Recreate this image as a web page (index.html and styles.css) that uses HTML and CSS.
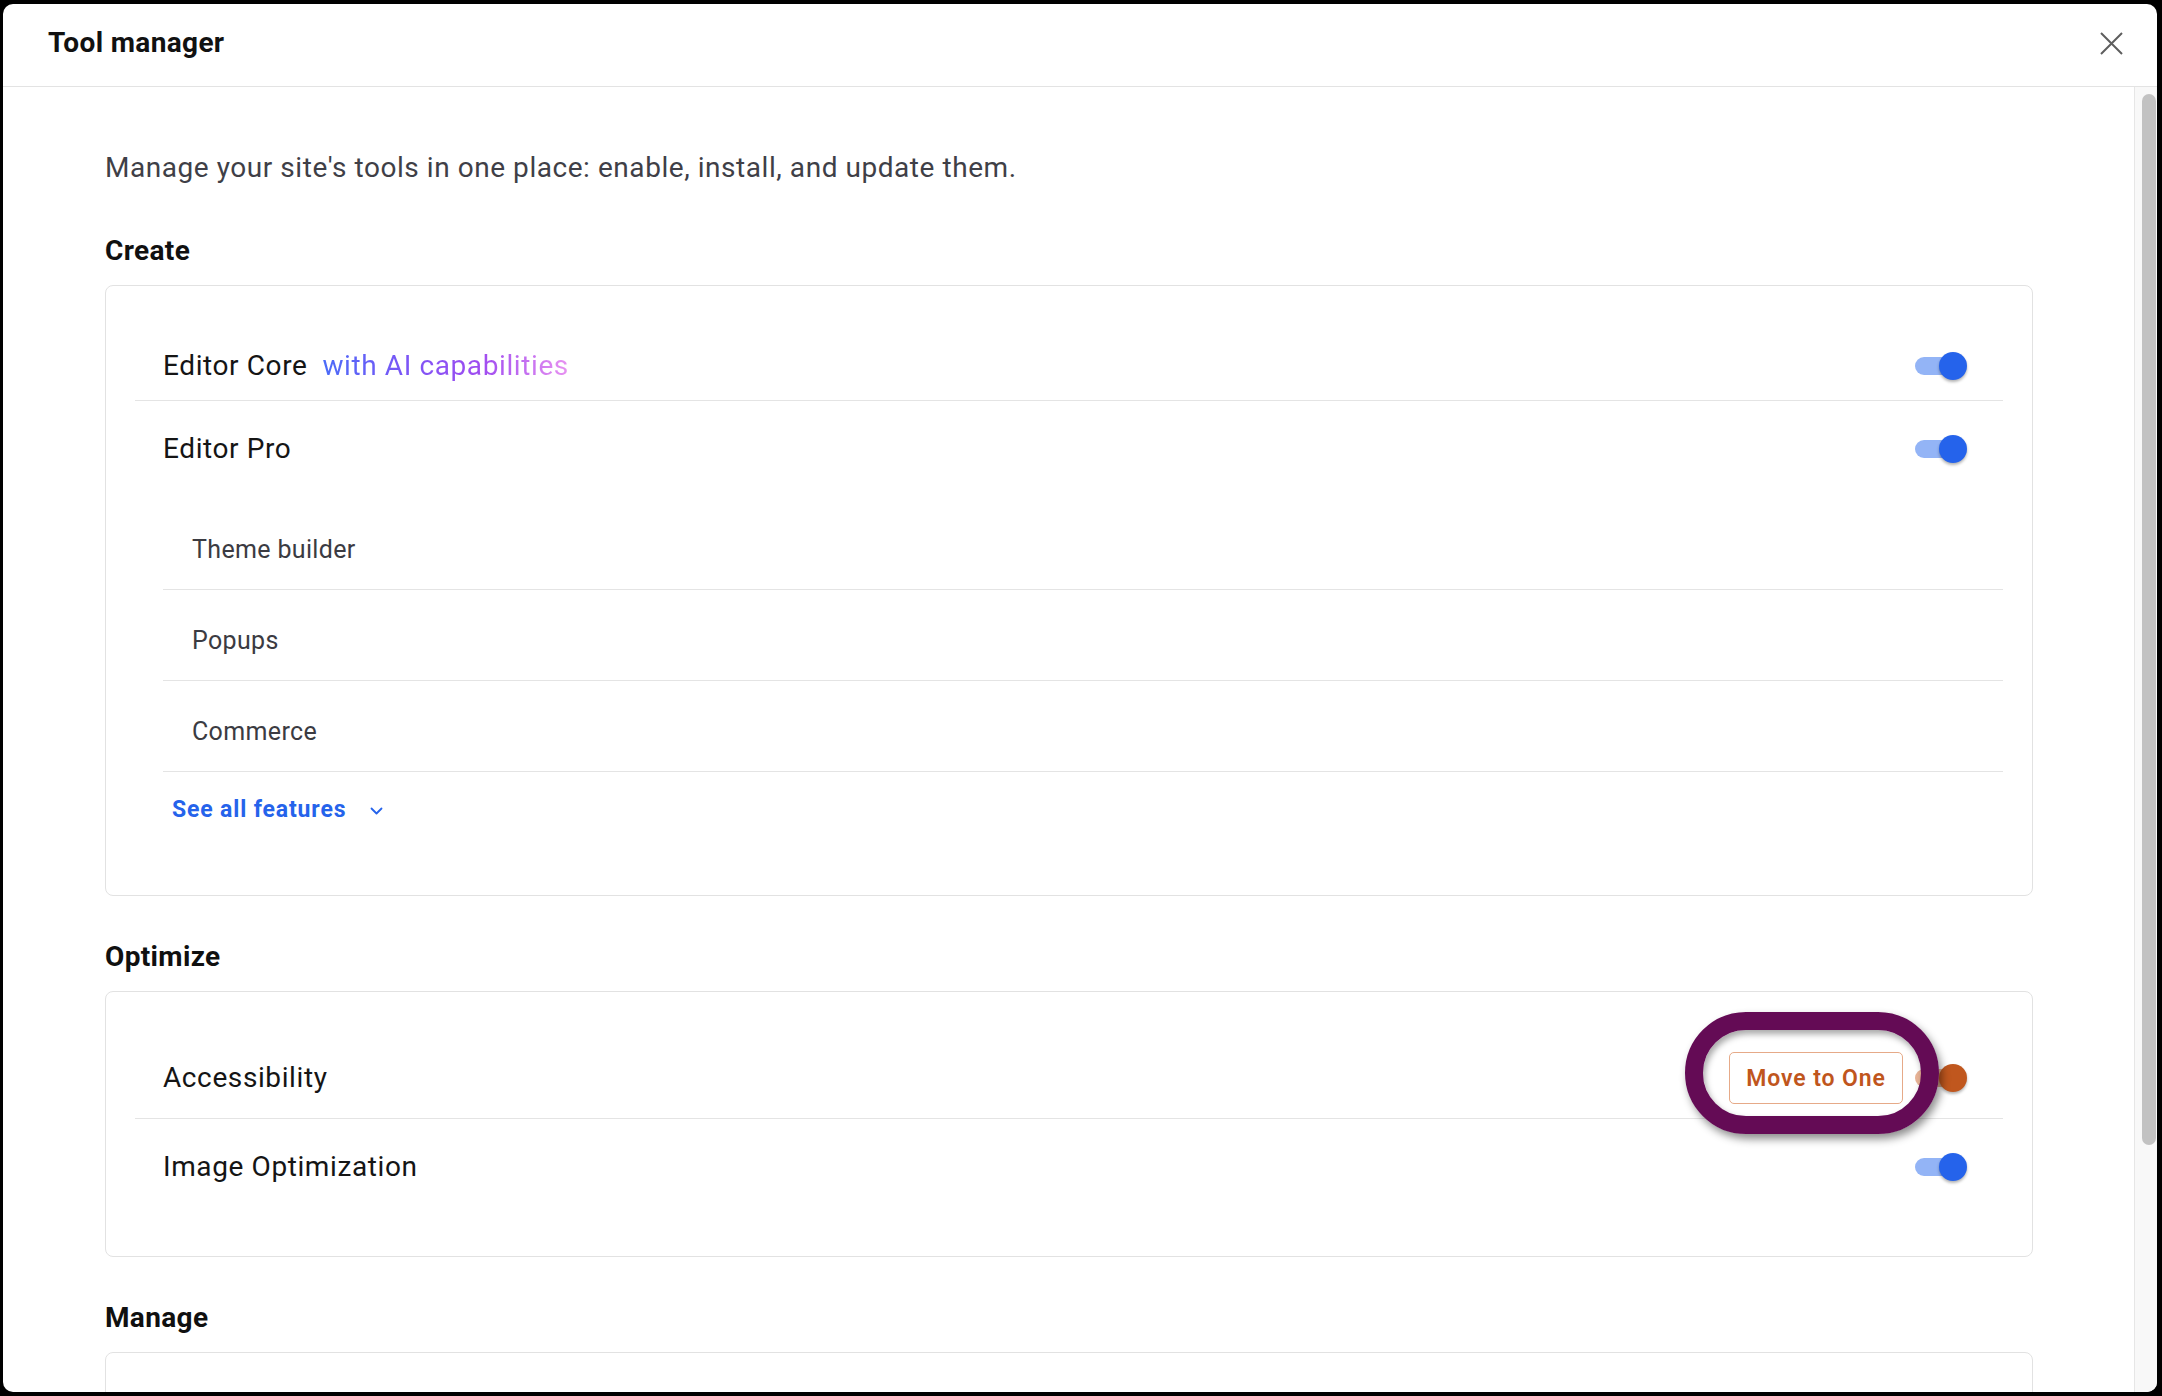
FILE: index.html
```html
<!DOCTYPE html>
<html lang="en">
<head>
<meta charset="utf-8">
<title>Tool manager</title>
<link rel="stylesheet" href="styles.css">
</head>
<body>
<div class="dialog">
  <header class="dialog-header">
    <h1 class="dialog-title">Tool manager</h1>
    <button class="close-btn" aria-label="Close">
      <svg width="23" height="23" viewBox="0 0 23 23"><path d="M1 1L22 22M22 1L1 22" stroke="#5e5e5e" stroke-width="2" fill="none"/></svg>
    </button>
  </header>
  <div class="dialog-body">
    <main class="content">
      <p class="intro">Manage your site's tools in one place: enable, install, and update them.</p>

      <section class="group">
        <h2 class="group-title">Create</h2>
        <div class="card card-create">
          <div class="tool-row divided">
            <div class="tool-name">Editor Core<span class="ai">with AI capabilities</span></div>
            <span class="toggle"><span class="track"></span><span class="thumb"></span></span>
          </div>
          <div class="tool-row">
            <div class="tool-name">Editor Pro</div>
            <span class="toggle"><span class="track"></span><span class="thumb"></span></span>
          </div>
          <div class="sublist">
            <div class="subrow">Theme builder</div>
            <div class="subrow">Popups</div>
            <div class="subrow">Commerce</div>
          </div>
          <a class="see-all" href="#">See all features
            <svg class="chev" width="13" height="8" viewBox="0 0 13 8"><path d="M1.5 1.5L6.5 6.5L11.5 1.5" stroke="#2563eb" stroke-width="1.8" fill="none" stroke-linecap="round" stroke-linejoin="round"/></svg>
          </a>
        </div>
      </section>

      <section class="group">
        <h2 class="group-title">Optimize</h2>
        <div class="card card-optimize">
          <div class="tool-row divided">
            <div class="tool-name">Accessibility</div>
            <div class="actions">
              <button class="move-btn">Move to One</button>
              <span class="toggle orange"><span class="track"></span><span class="thumb"></span></span>
              <span class="highlight-ring"></span>
            </div>
          </div>
          <div class="tool-row">
            <div class="tool-name">Image Optimization</div>
            <span class="toggle"><span class="track"></span><span class="thumb"></span></span>
          </div>
        </div>
      </section>

      <section class="group">
        <h2 class="group-title">Manage</h2>
        <div class="card card-manage"></div>
      </section>
    </main>
    <div class="scrollbar"><div class="scroll-thumb"></div></div>
  </div>
</div>
</body>
</html>
```

FILE: styles.css
```css
* { box-sizing: border-box; }
html, body { margin: 0; height: 100%; }
body {
  background: #000;
  font-family: Roboto, "Noto Sans", "Liberation Sans", Arial, sans-serif;
  overflow: hidden;
}
.dialog {
  margin: 4px 5px 4px 3px;
  height: calc(100vh - 8px);
  background: #fff;
  border-radius: 10px;
  display: flex;
  flex-direction: column;
  overflow: hidden;
}
.dialog-header {
  flex: 0 0 83px;
  display: flex;
  align-items: center;
  justify-content: space-between;
  padding: 0 34px 4px 45px;
  border-bottom: 1px solid #e3e3e3;
}
.dialog-title {
  margin: 0;
  font-size: 28px;
  line-height: 34px;
  font-weight: 700;
  color: #111;
  letter-spacing: 0.35px;
}
.close-btn {
  width: 23px;
  height: 23px;
  padding: 0;
  border: 0;
  background: none;
  display: flex;
}
.dialog-body {
  flex: 1;
  display: flex;
  min-height: 0;
}
.content {
  flex: 1;
  overflow: hidden;
  padding: 63px 101px 0 102px;
}
.scrollbar {
  flex: 0 0 23px;
  background: #f8f8f8;
  border-left: 1px solid #e6e6e6;
  padding: 7px 1px 0 7px;
}
.scroll-thumb {
  width: 14px;
  height: 1051px;
  background: #c2c2c2;
  border-radius: 7px;
}
.intro {
  margin: 0 0 47px;
  font-size: 28px;
  line-height: 36px;
  color: #3f3f47;
  letter-spacing: 0.55px;
}
.group + .group { margin-top: 43px; }
.group-title {
  margin: 0 0 16px;
  font-size: 28px;
  line-height: 36px;
  font-weight: 700;
  color: #101010;
  letter-spacing: 0.35px;
}
.card {
  border: 1px solid #e2e2e2;
  border-radius: 8px;
  padding: 32px 29px 0;
}
.card-create { padding-bottom: 70px; }
.card-optimize { padding-bottom: 55px; }
.card-manage { height: 200px; }
.tool-row {
  display: flex;
  align-items: center;
  justify-content: space-between;
  padding: 28px 36px 14px 28px;
}
.tool-row.divided { border-bottom: 1px solid #e4e4e4; }
.tool-name {
  font-size: 28px;
  line-height: 40px;
  color: #151515;
  letter-spacing: 0.6px;
}
.ai {
  margin-left: 15px;
  background: linear-gradient(90deg, #4a6cf8 0%, #7d55f6 35%, #a04cf0 65%, #e893f1 100%);
  -webkit-background-clip: text;
  background-clip: text;
  color: transparent;
}
.toggle {
  position: relative;
  display: block;
  width: 52px;
  height: 28px;
  flex: 0 0 52px;
}
.toggle .track {
  position: absolute;
  left: 0;
  top: 5px;
  width: 44px;
  height: 18px;
  border-radius: 9px;
  background: #93b4f6;
}
.toggle .thumb {
  position: absolute;
  right: 0;
  top: 0;
  width: 28px;
  height: 28px;
  border-radius: 50%;
  background: #2563eb;
  box-shadow: 0 2px 3px rgba(0, 0, 0, 0.3);
}
.toggle.orange .track { background: #e8b396; }
.toggle.orange .thumb { background: #c0571e; }
.sublist { margin: 16px 0 0 28px; }
.subrow {
  padding: 36px 0 24px 29px;
  font-size: 25px;
  line-height: 30px;
  color: #3b3b42;
  border-bottom: 1px solid #e4e4e4;
  letter-spacing: 0.35px;
}
.see-all {
  display: inline-flex;
  align-items: center;
  margin: 23px 0 0 37px;
  font-size: 23px;
  line-height: 30px;
  font-weight: 700;
  color: #2563eb;
  text-decoration: none;
  letter-spacing: 0.85px;
}
.see-all .chev { margin-left: 24px; margin-top: 2px; }
.actions {
  position: relative;
  display: flex;
  align-items: center;
  gap: 12px;
}
.move-btn {
  width: 174px;
  height: 52px;
  border: 1px solid #e6aa88;
  border-radius: 5px;
  background: #fff;
  color: #c0561d;
  font-family: inherit;
  font-size: 23px;
  font-weight: 600;
  letter-spacing: 0.9px;
  padding: 0;
}
.highlight-ring {
  position: absolute;
  left: -44px;
  top: -40px;
  width: 254px;
  height: 122px;
  border: 18px solid #640b55;
  border-radius: 61px;
  box-shadow: 3px 5px 8px rgba(0, 0, 0, 0.45), inset 2px 4px 6px rgba(0, 0, 0, 0.35);
  pointer-events: none;
}
```
